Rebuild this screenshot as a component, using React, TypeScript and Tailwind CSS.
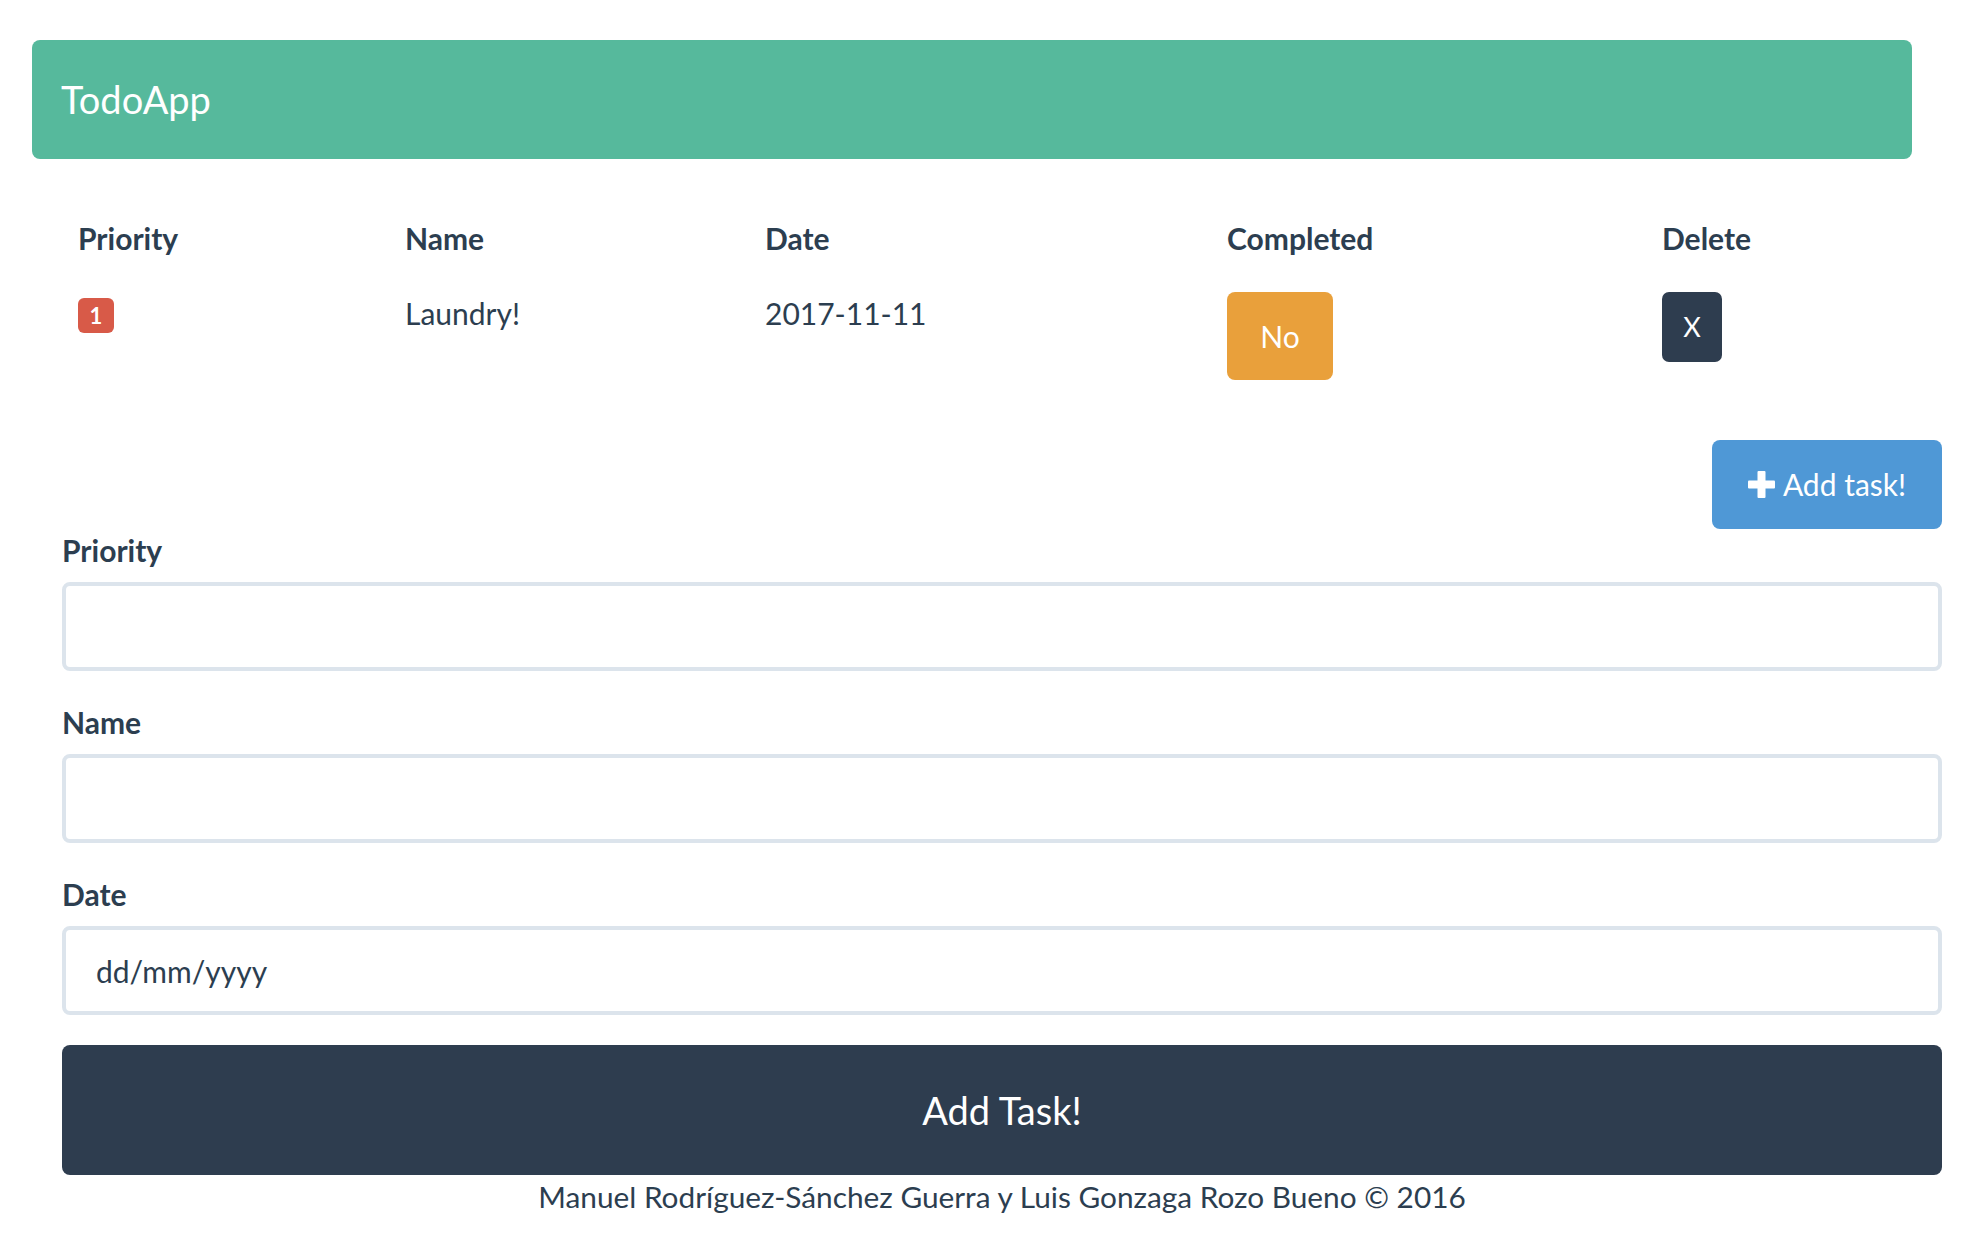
const tasks = [{ priority: 1, name: 'Laundry!', date: '2017-11-11', completed: false }]

const cols = [
  { label: 'Priority', width: 'w-[327px]' },
  { label: 'Name', width: 'w-[360px]' },
  { label: 'Date', width: 'w-[462px]' },
  { label: 'Completed', width: 'w-[435px]' },
  { label: 'Delete', width: 'w-[296px]' },
]

function PlusIcon() {
  return (
    <svg width="27" height="27" viewBox="0 0 27 27" fill="white">
      <rect x="9.5" y="0" width="8" height="27" rx="1" />
      <rect x="0" y="9.5" width="27" height="8" rx="1" />
    </svg>
  )
}

function Field({ label, placeholder }: { label: string; placeholder?: string }) {
  return (
    <div className="mb-[30px]">
      <label className="block text-[30px] font-bold leading-[43px] mb-[10px]">{label}</label>
      <input
        type="text"
        placeholder={placeholder}
        className="block w-full h-[89px] rounded-[8px] border-[4px] border-[#dce4ec] bg-white px-[30px] text-[30px] text-[#2c3e50] placeholder:text-[#2c3e50] outline-none"
      />
    </div>
  )
}

export default function App() {
  return (
    <div className="min-h-screen bg-white pt-[40px] text-[#2c3e50]" style={{ fontFamily: 'Lato, "Open Sans", sans-serif' }}>
      {/* Navbar */}
      <nav className="ml-[32px] w-[1880px] h-[119px] rounded-[8px] bg-[#56b99c] flex items-center pl-[29px]">
        <span className="text-[38px] text-white">TodoApp</span>
      </nav>

      <div className="pl-[62px] pr-[32px]">
        {/* Task table */}
        <table className="mt-[42px] mb-[44px] w-[1880px] table-fixed border-collapse">
          <thead>
            <tr>
              {cols.map((c) => (
                <th key={c.label} className={`${c.width} p-[16px] text-left text-[30px] font-bold leading-[43px]`}>
                  {c.label}
                </th>
              ))}
            </tr>
          </thead>
          <tbody>
            {tasks.map((t) => (
              <tr key={t.name}>
                <td className="p-[16px] align-top">
                  <span className="mt-[6px] flex h-[35px] w-[36px] items-center justify-center rounded-[6px] bg-[#d85a48] text-[22px] font-bold text-white">
                    {t.priority}
                  </span>
                </td>
                <td className="p-[16px] align-top text-[30px] leading-[43px]">{t.name}</td>
                <td className="p-[16px] align-top text-[30px] leading-[43px]">{t.date}</td>
                <td className="p-[16px] align-top">
                  <button className="h-[88px] w-[106px] rounded-[8px] bg-[#e9a03b] text-[30px] text-white">
                    {t.completed ? 'Yes' : 'No'}
                  </button>
                </td>
                <td className="p-[16px] align-top">
                  <button className="h-[70px] w-[60px] rounded-[7px] bg-[#2e3d4f] text-[27px] text-white">X</button>
                </td>
              </tr>
            ))}
          </tbody>
        </table>

        <div className="flex justify-end">
          <button className="flex h-[89px] w-[230px] items-center justify-center gap-[8px] rounded-[8px] bg-[#4f98d6] text-[30px] text-white">
            <PlusIcon />
            <span>Add task!</span>
          </button>
        </div>

        {/* New task form */}
        <form>
          <Field label="Priority" />
          <Field label="Name" />
          <Field label="Date" placeholder="dd/mm/yyyy" />
          <button type="button" className="block h-[130px] w-full rounded-[8px] bg-[#2e3d4f] text-[38px] text-white">
            Add Task!
          </button>
        </form>

        <footer className="text-center text-[29.8px] leading-[43px]">
          Manuel Rodríguez-Sánchez Guerra y Luis Gonzaga Rozo Bueno © 2016
        </footer>
      </div>
    </div>
  )
}
